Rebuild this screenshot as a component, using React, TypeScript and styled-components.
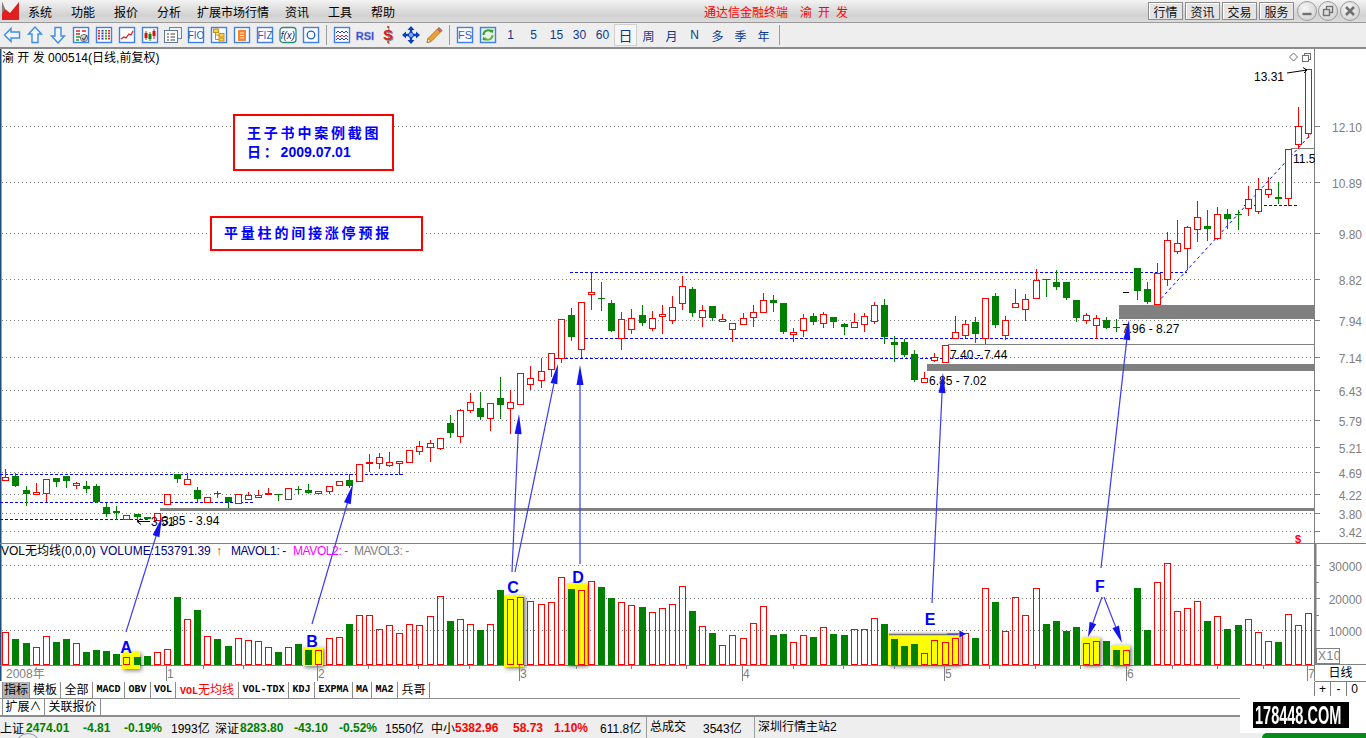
import React from 'react';
import styled, { createGlobalStyle } from 'styled-components';

const GlobalStyle = createGlobalStyle`
  html, body {
    margin: 0;
    padding: 0;
    background: #ffffff;
    overflow: hidden;
  }
  * {
    box-sizing: border-box;
  }
`;

const FONT = '"Liberation Sans", "Noto Sans CJK SC", sans-serif';
const MONO = '"Liberation Mono", "Noto Sans CJK SC", monospace';

// kind, body top, body bottom, wick top, wick bottom, volume top (all in page pixels)
type Bar = ['r' | 'g', number, number, number, number, number];

const BARS: Bar[] = [
  ['r', 477, 480, 469, 480, 632], ['g', 476, 486, 473, 486, 639], ['g', 490, 494, 486, 505, 643], ['r', 492, 494, 483, 494, 647],
  ['r', 479, 493, 479, 501, 636], ['g', 478, 482, 478, 486, 642], ['g', 476, 481, 476, 487, 639], ['r', 483, 485, 482, 488, 643],
  ['g', 486, 489, 481, 492, 652], ['g', 486, 502, 484, 502, 650], ['g', 507, 514, 503, 516, 651], ['g', 511, 513, 506, 519, 654],
  ['r', 515, 519, 515, 519, 657], ['g', 514, 517, 514, 520, 657], ['g', 517, 519, 517, 519, 656], ['r', 513, 520, 513, 520, 652],
  ['r', 494, 504, 494, 504, 649], ['g', 474, 479, 474, 482, 597], ['r', 479, 484, 473, 484, 619], ['g', 490, 499, 487, 501, 610],
  ['r', 497, 502, 497, 502, 636], ['g', 493, 494, 491, 497, 639], ['g', 497, 502, 497, 507, 646], ['r', 494, 503, 494, 503, 638],
  ['r', 495, 499, 492, 499, 640], ['r', 495, 497, 490, 497, 641], ['r', 493, 494, 488, 494, 647], ['g', 494, 495, 494, 500, 652],
  ['r', 488, 499, 488, 499, 647], ['g', 489, 490, 486, 493, 644], ['g', 490, 493, 484, 493, 650], ['r', 491, 493, 491, 493, 650],
  ['r', 486, 491, 486, 493, 638], ['r', 481, 485, 481, 485, 637], ['g', 480, 486, 474, 487, 624], ['r', 464, 481, 464, 481, 615],
  ['r', 462, 463, 454, 471, 615], ['r', 457, 463, 453, 468, 629], ['r', 462, 465, 452, 466, 625], ['r', 461, 463, 461, 474, 633],
  ['r', 450, 462, 450, 462, 624], ['r', 446, 451, 441, 454, 625], ['r', 443, 447, 440, 461, 616], ['r', 438, 448, 438, 449, 596],
  ['g', 423, 433, 415, 437, 621], ['r', 410, 436, 409, 442, 619], ['r', 402, 410, 393, 412, 624], ['g', 408, 417, 392, 419, 630],
  ['r', 403, 418, 403, 430, 624], ['g', 398, 405, 377, 418, 590], ['r', 402, 408, 390, 433, 599], ['r', 373, 404, 373, 404, 597],
  ['r', 378, 384, 366, 389, 601], ['r', 371, 380, 358, 387, 604], ['r', 353, 369, 353, 376, 602], ['r', 319, 358, 319, 362, 577],
  ['g', 315, 337, 308, 340, 589], ['r', 302, 349, 302, 357, 590], ['r', 292, 294, 273, 309, 581], ['g', 298, 299, 282, 310, 587],
  ['g', 303, 331, 300, 331, 598], ['r', 319, 338, 312, 349, 602], ['r', 318, 329, 309, 333, 605], ['g', 315, 323, 305, 325, 607],
  ['r', 318, 328, 311, 330, 612], ['r', 314, 316, 305, 333, 608], ['r', 307, 320, 296, 323, 604], ['r', 286, 303, 276, 309, 586],
  ['g', 289, 313, 287, 316, 611], ['r', 310, 317, 305, 326, 626], ['g', 306, 318, 306, 320, 633], ['r', 319, 321, 314, 321, 645],
  ['r', 323, 329, 323, 341, 635], ['r', 318, 324, 313, 324, 638], ['r', 312, 317, 305, 326, 623], ['r', 300, 312, 293, 312, 606],
  ['g', 300, 303, 295, 311, 635], ['g', 303, 332, 303, 333, 634], ['r', 332, 334, 328, 341, 642], ['r', 318, 330, 314, 336, 635],
  ['g', 316, 322, 313, 324, 637], ['r', 314, 323, 312, 327, 627], ['g', 317, 322, 317, 327, 634], ['g', 324, 327, 323, 334, 635],
  ['r', 322, 327, 313, 327, 629], ['r', 316, 324, 313, 331, 629], ['r', 305, 321, 302, 323, 618], ['g', 305, 337, 299, 343, 624],
  ['g', 342, 345, 336, 361, 639], ['g', 342, 355, 339, 356, 646], ['g', 354, 380, 350, 381, 644], ['r', 378, 382, 372, 382, 653],
  ['r', 357, 360, 353, 361, 640], ['r', 345, 362, 345, 362, 642], ['r', 332, 338, 316, 338, 638], ['r', 324, 335, 320, 337, 633],
  ['g', 322, 334, 317, 342, 638], ['r', 298, 338, 298, 343, 588], ['g', 296, 325, 293, 327, 602], ['r', 320, 335, 316, 339, 631],
  ['r', 303, 307, 289, 307, 597], ['r', 299, 309, 294, 320, 615], ['r', 280, 298, 269, 298, 588], ['g', 279, 280, 279, 296, 624],
  ['g', 282, 287, 270, 289, 621], ['g', 282, 298, 282, 299, 631], ['g', 300, 318, 300, 321, 627], ['r', 315, 320, 313, 323, 643],
  ['r', 318, 325, 315, 338, 641], ['g', 320, 328, 317, 328, 641], ['g', 327, 328, 319, 331, 650], ['r', 0, 0, 0, 0, 650],
  ['g', 268, 291, 268, 299, 588], ['g', 289, 302, 282, 303, 630], ['r', 273, 304, 263, 304, 582], ['r', 240, 279, 232, 285, 563],
  ['r', 243, 251, 220, 253, 611], ['r', 227, 248, 226, 269, 608], ['r', 217, 229, 201, 241, 601], ['g', 226, 229, 210, 240, 621],
  ['r', 214, 238, 207, 239, 616], ['g', 214, 219, 209, 228, 629], ['g', 214, 215, 210, 229, 625], ['r', 199, 208, 186, 215, 619],
  ['r', 189, 211, 178, 213, 632], ['r', 189, 194, 177, 197, 641], ['g', 197, 199, 182, 203, 642], ['r', 149, 198, 149, 205, 614],
  ['r', 126, 144, 107, 148, 625], ['r', 69, 133, 69, 137, 613],
];

const barX = (i: number) => Math.round(5.3 + 10.1 * i);

const GRID_Y = [126, 182, 233, 279, 320, 357, 390, 420, 447, 472, 494, 513, 531];
const PRICES = ['12.10', '10.89', '9.80', '8.82', '7.94', '7.14', '6.43', '5.79', '5.21', '4.69', '4.22', '3.80', '3.42'];
const VOL_GRID = [
  { y: 565, label: '30000' },
  { y: 598, label: '20000' },
  { y: 630, label: '10000' },
];
const MONTHS = [
  { x: 166, label: '1' },
  { x: 317, label: '2' },
  { x: 519, label: '3' },
  { x: 742, label: '4' },
  { x: 944, label: '5' },
  { x: 1126, label: '6' },
  { x: 1307, label: '7' },
];
const DATE_TICKS = [203, 243, 368, 418, 469, 576, 631, 686, 793, 843, 894, 989, 1035, 1080, 1172, 1217, 1263];

const DASHED = [
  [0, 474, 405],
  [0, 502, 253],
  [0, 519, 150],
  [570, 272, 1187],
  [580, 338, 1123],
  [555, 358, 985],
  [1244, 205, 1297],
];

const HIGHLIGHTS = [
  [122, 652, 18, 17],
  [303, 647, 20, 19],
  [504, 595, 20, 72],
  [567, 583, 20, 82],
  [888, 633, 72, 32],
  [1082, 637, 18, 28],
  [1111, 645, 19, 20],
];

const ARROWS = [
  [126, 632, 162, 517],
  [312, 624, 353, 484],
  [512, 572, 519, 414],
  [515, 572, 558, 364],
  [580, 564, 580, 365],
  [932, 603, 943, 373],
  [1101, 568, 1129, 320],
  [1102, 597, 1088, 637],
  [1104, 597, 1122, 643],
  [947, 634, 966, 634],
];

const LETTERS = [
  { x: 126, y: 653, t: 'A' },
  { x: 312, y: 647, t: 'B' },
  { x: 513, y: 593, t: 'C' },
  { x: 578, y: 583, t: 'D' },
  { x: 930, y: 625, t: 'E' },
  { x: 1100, y: 592, t: 'F' },
];

const CHART_LABELS = [
  { x: 162, y: 525, t: '3.85 - 3.94' },
  { x: 151, y: 526, t: '3.51' },
  { x: 1122, y: 333, t: '7.96 - 8.27' },
  { x: 950, y: 359, t: '7.40 - 7.44' },
  { x: 929, y: 385, t: '6.85 - 7.02' },
  { x: 1254, y: 81, t: '13.31' },
  { x: 1293, y: 163, t: '11.5' },
];

const BLUE = '#3f7fe8';

const Page = styled.div`
  width: 1366px;
  height: 738px;
  position: relative;
  overflow: hidden;
  font-family: ${FONT};
  font-size: 12px;
  color: #000000;
  background: #ffffff;
`;

const TitleBar = styled.div`
  height: 23px;
  display: flex;
  align-items: center;
  background: linear-gradient(#f4f4f4, #e6e6e6 25%, #d2d2d2 70%, #dcdcdc);
  border-bottom: 1px solid #9a9a9a;
`;

const Logo = styled.svg`
  width: 17px;
  height: 18px;
  margin-left: 2px;
  margin-right: 9px;
  flex: none;
`;

const Menu = styled.div`
  display: flex;
  width: 676px;
`;

const MenuItem = styled.span<{ $w: number }>`
  width: ${(p) => p.$w}px;
  flex: none;
`;

const AppTitle = styled.div`
  display: flex;
  color: #ff0000;
  width: 444px;
  flex: none;
`;

const AppName = styled.span`
  margin-right: 12px;
`;

const StockWide = styled.span`
  letter-spacing: 6px;
`;

const QuickButtons = styled.div`
  display: flex;
  gap: 2px;
  margin-right: 1px;
`;

const QuickButton = styled.button`
  width: 35px;
  height: 18px;
  padding: 0;
  font: 12px ${FONT};
  color: #111111;
  background: #e4e4e4;
  border: 1px solid #8c8c8c;
  box-shadow: inset 1px 1px 0 #ffffff;
`;

const WinButton = styled.div`
  width: 20px;
  height: 20px;
  margin-left: 1.5px;
  border-radius: 50%;
  border: 1px solid #9c9c9c;
  background: radial-gradient(circle at 40% 35%, #f6f6f6, #cacaca);
  display: flex;
  align-items: center;
  justify-content: center;
  flex: none;
`;

const Toolbar = styled.div`
  height: 26px;
  display: flex;
  align-items: center;
  background: #eeeeee;
  border-bottom: 2px solid #8c8c8c;
`;

const ToolButton = styled.div<{ $active?: boolean }>`
  width: 23px;
  height: 22px;
  flex: none;
  display: flex;
  align-items: center;
  justify-content: center;
  font-size: ${(p) => (p.$active ? 14 : 12)}px;
  color: #0a3a8c;
  background: ${(p) => (p.$active ? '#f6f6f6' : 'transparent')};
  border: ${(p) => (p.$active ? '1px solid #d0d0d0' : 'none')};
`;

const ToolSep = styled.div`
  width: 8px;
  height: 20px;
  flex: none;
  position: relative;
  &::after {
    content: '';
    position: absolute;
    left: 4px;
    top: 0;
    bottom: 0;
    width: 1px;
    background: #9c9c9c;
  }
`;

const ChartRow = styled.div`
  display: flex;
  height: 633px;
`;

const Plot = styled.div`
  width: 1315px;
  height: 633px;
  position: relative;
  flex: none;
  overflow: hidden;
`;

const ChartSvg = styled.svg`
  display: block;
  font-family: ${FONT};
`;

const AxisColumn = styled.div`
  width: 51px;
  display: flex;
  flex-direction: column;
`;

const DayLabel = styled.div`
  height: 17px;
  line-height: 16px;
  text-align: center;
  font-size: 12px;
  border-bottom: 1px solid #808080;
`;

const StockHeading = styled.div`
  position: absolute;
  left: 2px;
  top: 2px;
  font-size: 12px;
  line-height: 14px;
  white-space: pre;
`;

const VolLegend = styled.div`
  position: absolute;
  left: 1px;
  top: 495px;
  display: flex;
  line-height: 14px;
  white-space: nowrap;
`;

const LegendItem = styled.span<{ $color: string; $w: number; $tight?: boolean }>`
  color: ${(p) => p.$color};
  width: ${(p) => p.$w}px;
  flex: none;
  letter-spacing: ${(p) => (p.$tight ? -0.4 : 0)}px;
`;

const Note = styled.div<{ $x: number; $y: number; $w: number; $h: number }>`
  position: absolute;
  left: ${(p) => p.$x}px;
  top: ${(p) => p.$y - 49}px;
  width: ${(p) => p.$w}px;
  height: ${(p) => p.$h}px;
  border: 2px solid #ff0000;
  background: #ffffff;
  padding-left: 12px;
  display: flex;
  flex-direction: column;
  justify-content: center;
  color: #0000ff;
  font-size: 14px;
  font-weight: 700;
  line-height: 19px;
  letter-spacing: 2.8px;
`;

const NoteDigits = styled.span`
  letter-spacing: 0;
`;

const TabRow = styled.div`
  height: 17px;
  display: flex;
  border-bottom: 1px solid #8c8c8c;
  position: relative;
`;

const RowTwo = styled(TabRow)`
  height: 18px;
  border-bottom-width: 2px;
`;

const Tab = styled.div<{ $w: number; $active?: boolean; $mono?: boolean; $hot?: boolean }>`
  width: ${(p) => p.$w}px;
  flex: none;
  text-align: center;
  line-height: 16px;
  border-right: 1px solid #8c8c8c;
  background: ${(p) => (p.$active ? '#b4b4b4' : '#ffffff')};
  color: ${(p) => (p.$hot ? '#ff0000' : '#000000')};
  font-family: ${(p) => (p.$mono ? MONO : FONT)};
  font-size: ${(p) => (p.$mono ? 10 : 12)}px;
  font-weight: ${(p) => (p.$mono ? 700 : 400)};
  &:first-child {
    margin-left: 2px;
    border-left: 1px solid #8c8c8c;
  }
`;

const TabHan = styled.span`
  font-family: ${FONT};
  font-size: 12px;
  font-weight: 400;
`;

const ZoomCells = styled.div`
  position: absolute;
  left: 1314px;
  top: 0;
  display: flex;
`;

const ZoomCell = styled.div`
  width: 16px;
  height: 16px;
  text-align: center;
  line-height: 15px;
  border-left: 1px solid #808080;
`;

const StatusBar = styled.div`
  height: 21px;
  display: flex;
  align-items: center;
  background: #eeeeee;
  white-space: nowrap;
`;

const Quote = styled.span<{ $w: number; $tone?: 'up' | 'down' }>`
  width: ${(p) => p.$w}px;
  flex: none;
  font-weight: ${(p) => (p.$tone ? 700 : 400)};
  color: ${(p) => (p.$tone === 'up' ? '#ff0000' : p.$tone === 'down' ? '#008000' : '#000000')};
`;

const StatusCell = styled.span<{ $w: number }>`
  width: ${(p) => p.$w}px;
  height: 21px;
  line-height: 21px;
  flex: none;
  padding-left: 3px;
  border-left: 1px solid #9c9c9c;
`;

const LensArc = styled.div`
  position: absolute;
  left: 15px;
  top: 733px;
  width: 26px;
  height: 26px;
  border-radius: 50%;
  border: 1px solid #7f97b0;
`;

const Watermark = styled.div`
  position: absolute;
  left: 1240px;
  top: 696px;
  width: 126px;
  height: 37px;
  background: #ffffff;
  display: flex;
  align-items: center;
  padding-left: 13px;
`;

const WatermarkText = styled.div`
  width: 96px;
  height: 26px;
  background: #000000;
  overflow: hidden;
  color: #ffffff;
  font-size: 25px;
  font-weight: 700;
  line-height: 26px;
  white-space: nowrap;
  & > span {
    display: inline-block;
    transform: scaleX(0.58);
    transform-origin: left center;
    margin-left: 2px;
  }
`;

const GreenBlob = styled.div`
  position: absolute;
  left: 1262px;
  top: 733px;
  width: 104px;
  height: 5px;
  background: #0a8a1a;
  border-radius: 6px 0 0 0;
`;

const Frame = ({ children, color = BLUE }: { children?: React.ReactNode; color?: string }) => (
  <svg width="18" height="18" viewBox="0 0 18 18">
    <rect x="1.5" y="1.5" width="15" height="15" fill="#ffffff" stroke={color} strokeWidth="1.4" />
    {children}
  </svg>
);

const FrameText = ({ t, size = 10 }: { t: string; size?: number }) => (
  <text x="9" y="13" fontSize={size} fontFamily={FONT} fill="#1f5fc8" textAnchor="middle">
    {t}
  </text>
);

const OutlineArrow = ({ d }: { d: string }) => (
  <svg width="18" height="18" viewBox="0 0 18 18">
    <path d={d} fill="#f2f7ff" stroke="#3f8ce8" strokeWidth="1.4" strokeLinejoin="miter" />
  </svg>
);

const ICONS: React.ReactNode[] = [
  <OutlineArrow key="back" d="M1.5 9 L8 2.5 V6 H16.5 V12 H8 V15.5 Z" />,
  <OutlineArrow key="up" d="M9 1 L15.5 8 H12 V16.5 H6 V8 H2.5 Z" />,
  <OutlineArrow key="down" d="M9 17 L15.5 10 H12 V1.5 H6 V10 H2.5 Z" />,
  <Frame key="list">
    <path d="M4 5 H8 M10 5 H14 M4 8 H8" stroke="#e02020" strokeWidth="1.4" />
    <path d="M4 11 H8 M4 14 H7" stroke="#18a018" strokeWidth="1.4" />
    <circle cx="12" cy="12" r="3.6" fill="#d8d8d8" stroke="#707070" />
    <path d="M10 12 L12 14 L15 9" fill="none" stroke="#505050" strokeWidth="1.2" />
  </Frame>,
  <Frame key="table">
    <path d="M4 4 V14" stroke="#e02020" strokeWidth="2" strokeDasharray="1.6 1" />
    <path d="M7.5 4 V14" stroke="#2020e0" strokeWidth="2" strokeDasharray="1.6 1" />
    <path d="M11 4 V14" stroke="#18a018" strokeWidth="2" strokeDasharray="1.6 1" />
    <path d="M14 4 V14" stroke="#e02020" strokeWidth="2" strokeDasharray="1.6 1" />
  </Frame>,
  <Frame key="line">
    <path d="M3 13 L6 11 L8 12 L11 8 L13 9 L15 5" fill="none" stroke="#e01010" strokeWidth="1.2" />
  </Frame>,
  <Frame key="candle">
    <path d="M5 5 V14 M13 3 V13" stroke="#e01010" />
    <path d="M9 6 V15" stroke="#108010" />
    <rect x="3.5" y="7" width="3" height="5" fill="#e01010" />
    <rect x="7.5" y="8" width="3" height="5" fill="#108010" />
    <rect x="11.5" y="5" width="3" height="5" fill="#e01010" />
  </Frame>,
  <svg key="windows" width="18" height="18" viewBox="0 0 18 18">
    <rect x="5.5" y="1.5" width="12" height="11" fill="#eef3fb" stroke="#5d86c0" />
    <rect x="0.5" y="4.5" width="13" height="12" fill="#ffffff" stroke="#607898" />
    <path d="M3 8 H5 M6.5 8 H11 M3 11 H5 M6.5 11 H11 M3 14 H5 M6.5 14 H11" stroke="#404040" />
  </svg>,
  <Frame key="f10">
    <FrameText t="FIO" />
  </Frame>,
  <Frame key="tree">
    <rect x="3.5" y="3" width="5" height="3.5" fill="#f6d24a" stroke="#c89018" />
    <rect x="9" y="7.5" width="5" height="3.5" fill="#f6d24a" stroke="#c89018" />
    <rect x="9" y="12" width="5" height="3" fill="#f6d24a" stroke="#c89018" />
    <path d="M5.5 6.5 V13.5 H9 M5.5 9 H9" fill="none" stroke="#c89018" />
  </Frame>,
  <Frame key="clip">
    <rect x="5" y="4" width="8" height="11" fill="#f08838" />
    <path d="M7 3.5 H11 M7 7 H11 M7 9.5 H11 M7 12 H11" stroke="#ffe8d0" strokeWidth="1.1" />
  </Frame>,
  <Frame key="f12">
    <FrameText t="FIZ" />
  </Frame>,
  <svg key="fx" width="18" height="18" viewBox="0 0 18 18">
    <rect x="1" y="1.5" width="16" height="15" rx="3" fill="#ffffff" stroke="#2a8a80" strokeWidth="1.3" />
    <text x="9" y="13" fontSize="10" fontStyle="italic" fontFamily={FONT} fill="#10306a" textAnchor="middle">
      f(x)
    </text>
  </svg>,
  <Frame key="circle">
    <circle cx="9" cy="9" r="3.8" fill="none" stroke="#1f5fc8" strokeWidth="1.3" />
  </Frame>,
  <Frame key="wave">
    <path d="M3 7 L5 5 L7 7 L9 5 L11 7 L13 5 L15 7" fill="none" stroke="#2040d0" />
    <path d="M3 11 L5 9 L7 11 L9 9 L11 11 L13 9 L15 11" fill="none" stroke="#e02020" />
    <path d="M3 14 L5 12 L7 14 L9 12 L11 14 L13 12 L15 14" fill="none" stroke="#2040d0" />
  </Frame>,
  <svg key="rsi" width="22" height="18" viewBox="0 0 22 18">
    <text x="11" y="13.5" fontSize="11" fontWeight="700" fontFamily={FONT} fill="#3048c8" stroke="#8090e0" strokeWidth="0.3" textAnchor="middle">
      RSI
    </text>
  </svg>,
  <svg key="dollar" width="18" height="20" viewBox="0 0 18 20">
    <path d="M9.8 1 V19" stroke="#909090" strokeWidth="1.4" />
    <text x="10" y="16" fontSize="15" fontWeight="700" fontFamily={FONT} fill="#8c8c8c" textAnchor="middle">
      S
    </text>
    <text x="9" y="15" fontSize="15" fontWeight="700" fontFamily={FONT} fill="#d82020" textAnchor="middle">
      S
    </text>
    <path d="M9 1 V3 M9 16 V18" stroke="#d82020" strokeWidth="1.4" />
  </svg>,
  <svg key="move" width="20" height="20" viewBox="0 0 20 20">
    <path d="M10 1 L13.5 5 H6.5 Z M10 19 L13.5 15 H6.5 Z M1 10 L5 6.5 V13.5 Z M19 10 L15 6.5 V13.5 Z" fill="#0a3fc0" />
    <path d="M3 10 H17 M10 3 V17" stroke="#0a3fc0" strokeWidth="2.4" />
    <circle cx="10" cy="10" r="2.6" fill="#7fa8ee" stroke="#0a3fc0" />
  </svg>,
  <svg key="pencil" width="18" height="18" viewBox="0 0 18 18">
    <path d="M3 12.5 L12.5 3 L15.5 6 L6 15.5 L2 16.5 Z" fill="#f0a030" stroke="#b87820" />
    <path d="M12.5 3 L14 1.6 L17 4.5 L15.5 6 Z" fill="#e07070" stroke="#a05050" />
    <path d="M2 16.5 L3 12.5 L6 15.5 Z" fill="#f8e8c8" stroke="#806030" strokeWidth="0.6" />
  </svg>,
];

const FS_ICONS: React.ReactNode[] = [
  <Frame key="fs">
    <FrameText t="FS" size={11} />
  </Frame>,
  <svg key="refresh" width="18" height="18" viewBox="0 0 18 18">
    <rect x="1.5" y="1.5" width="15" height="15" fill="#e8f0e8" stroke={BLUE} strokeWidth="1.4" />
    <path d="M4.5 9 A4.5 4.5 0 0 1 12.5 6" fill="none" stroke="#30a030" strokeWidth="2" />
    <path d="M13.5 9 A4.5 4.5 0 0 1 5.5 12" fill="none" stroke="#60b840" strokeWidth="2" />
    <path d="M11 3.5 L14.5 4 L13.5 7.5 Z M7 14.5 L3.5 14 L4.5 10.5 Z" fill="#30a030" />
  </svg>,
];

const PERIODS = ['1', '5', '15', '30', '60', '日', '周', '月', 'N', '多', '季', '年'];

const TABS = [
  { t: '指标', w: 28, active: true },
  { t: '模板', w: 31 },
  { t: '全部', w: 32 },
  { t: 'MACD', w: 32, mono: true },
  { t: 'OBV', w: 26, mono: true },
  { t: 'VOL', w: 25, mono: true },
  { t: 'VOL无均线', w: 63, mono: true, hot: true },
  { t: 'VOL-TDX', w: 50, mono: true },
  { t: 'KDJ', w: 26, mono: true },
  { t: 'EXPMA', w: 38, mono: true },
  { t: 'MA', w: 19, mono: true },
  { t: 'MA2', w: 26, mono: true },
  { t: '兵哥', w: 32 },
];

type Tone = 'up' | 'down' | undefined;
const QUOTES: [string, number, Tone][] = [
  ['上证', 26, undefined], ['2474.01', 57, 'down'], ['-4.81', 41, 'down'], ['-0.19%', 47, 'down'], ['1993亿', 44, undefined],
  ['深证', 25, undefined], ['8283.80', 54, 'down'], ['-43.10', 45, 'down'], ['-0.52%', 46, 'down'], ['1550亿', 46, undefined],
  ['中小', 24, undefined], ['5382.96', 58, 'up'], ['58.73', 41, 'up'], ['1.10%', 46, 'up'], ['611.8亿', 46, undefined],
];

const Arrow = ({ a }: { a: number[] }) => {
  const [x1, y1, x2, y2] = a;
  const len = Math.hypot(x2 - x1, y2 - y1);
  const ux = (x2 - x1) / len;
  const uy = (y2 - y1) / len;
  const head = Math.min(20, len * 0.35);
  const bx = x2 - ux * head;
  const by = y2 - uy * head;
  const pts = `${x2},${y2} ${bx - uy * 3.5},${by + ux * 3.5} ${bx + uy * 3.5},${by - ux * 3.5}`;
  return (
    <g>
      <line x1={x1} y1={y1} x2={bx} y2={by} stroke="#3a3af4" strokeWidth="1.2" />
      <polygon points={pts} fill="#1414f0" />
    </g>
  );
};

const PlotDrawing = () => (
  <ChartSvg width="1315" height="633" viewBox="0 49 1315 633">
    <defs>
      <filter id="hl" x="-30%" y="-30%" width="170%" height="170%">
        <feDropShadow dx="1.5" dy="1.5" stdDeviation="2" floodColor="#444444" floodOpacity="0.75" />
      </filter>
    </defs>
    <rect x="0" y="49" width="1.5" height="632" fill="#1b4f7f" />

    {[...GRID_Y, ...VOL_GRID.map((v) => v.y)].map((y) => (
      <line key={y} x1="2" x2="1314" y1={y + 0.5} y2={y + 0.5} stroke="#808080" strokeDasharray="1 3" />
    ))}

    <line x1="0" x2="1315" y1="543.5" y2="543.5" stroke="#808080" />
    <line x1="0" x2="1315" y1="665.5" y2="665.5" stroke="#808080" />
    <line x1="1314.5" x2="1314.5" y1="49" y2="681" stroke="#808080" />

    <rect x="160" y="508" width="1155" height="3" fill="#808080" />
    <rect x="927" y="364" width="388" height="7" fill="#808080" />
    <rect x="1119" y="305" width="196" height="14" fill="#808080" />
    <line x1="948" x2="1315" y1="344.5" y2="344.5" stroke="#808080" />
    <line x1="1291" x2="1315" y1="148.5" y2="148.5" stroke="#808080" />

    {DASHED.map(([x1, y, x2]) => (
      <line key={`${x1}-${y}`} x1={x1} x2={x2} y1={y + 0.5} y2={y + 0.5} stroke="#0000ff" strokeDasharray="3 2" />
    ))}
    <line x1="1157" y1="303" x2="1312" y2="133" stroke="#0000ff" strokeDasharray="3 3" />

    {HIGHLIGHTS.map(([x, y, w, h]) => (
      <rect key={x} x={x} y={y} width={w} height={h} fill="#ffff00" filter="url(#hl)" />
    ))}
    <line x1="889" x2="958" y1="634.5" y2="634.5" stroke="#707070" strokeWidth="1.5" />

    {BARS.map((b, i) => {
      const cx = barX(i);
      return b[0] === 'r' ? (
        <rect key={i} x={cx - 2.5} y={b[5] + 0.5} width="6" height={664 - b[5]} fill="none" stroke="#ff0000" />
      ) : (
        <rect key={i} x={cx - 3} y={b[5]} width="7" height={665 - b[5]} fill="#008000" />
      );
    })}

    {BARS.map((b, i) => {
      const cx = barX(i);
      const [kind, top, bottom, wickTop, wickBottom] = b;
      if (top === 0) return null;
      const color = kind === 'r' ? '#ff0000' : '#008000';
      return (
        <g key={i}>
          <line x1={cx + 0.5} x2={cx + 0.5} y1={wickTop} y2={wickBottom + 1} stroke={color} />
          {kind === 'r' ? (
            <rect x={cx - 2.5} y={top + 0.5} width="6" height={Math.max(bottom - top, 1)} fill="#ffffff" stroke={color} />
          ) : (
            <rect x={cx - 3} y={top} width="7" height={Math.max(bottom - top, 1)} fill={color} />
          )}
        </g>
      );
    })}

    <line x1="1123" x2="1129" y1="292.5" y2="292.5" stroke="#000000" />
    <line x1="137" x2="150" y1="521.5" y2="521.5" stroke="#000000" />
    <path d="M141 518.5 L137 521.5 L141 524.5" fill="none" stroke="#000000" />
    <path d="M1287 73 L1307 70 M1303 67.5 L1307 70 L1304 73" fill="none" stroke="#000000" />

    {CHART_LABELS.map((l) => (
      <text key={l.t} x={l.x} y={l.y} fontSize="12" fill="#000000">
        {l.t}
      </text>
    ))}

    <text x="1295" y="543" fontSize="11" fontWeight="700" fill="#ff0000">
      $
    </text>

    <path d="M1293.5 53 L1297.5 57 L1293.5 61 L1289.5 57 Z" fill="#ffffff" stroke="#707070" />
    <rect x="1304.5" y="53.5" width="6" height="6" fill="#ffffff" stroke="#707070" />
    <rect x="1302.5" y="55.5" width="6" height="6" fill="#ffffff" stroke="#707070" />

    {ARROWS.map((a) => (
      <Arrow key={a.join('-')} a={a} />
    ))}

    {LETTERS.map((l) => (
      <text key={l.t} x={l.x} y={l.y} fontSize="16" fontWeight="700" fill="#0000ff" textAnchor="middle">
        {l.t}
      </text>
    ))}

    {DATE_TICKS.map((x) => (
      <line key={x} x1={x + 0.5} x2={x + 0.5} y1="665" y2="669" stroke="#808080" />
    ))}
    {MONTHS.map((m) => (
      <g key={m.label}>
        <line x1={m.x + 0.5} x2={m.x + 0.5} y1="665" y2="681" stroke="#808080" />
        <text x={m.x + 1} y="678" fontSize="12" fill="#808080">
          {m.label}
        </text>
      </g>
    ))}
    <text x="6" y="678" fontSize="12" fill="#808080" fontFamily={FONT}>
      2008年
    </text>
  </ChartSvg>
);

const AxisDrawing = () => (
  <ChartSvg width="51" height="616" viewBox="1315 49 51 616">
    <line x1="1315" x2="1366" y1="543.5" y2="543.5" stroke="#808080" />
    <line x1="1315" x2="1366" y1="664.5" y2="664.5" stroke="#808080" />
    <rect x="1315" y="544" width="1.5" height="121" fill="#808080" />
    {GRID_Y.map((y, i) => (
      <g key={y}>
        <line x1="1315" x2="1320" y1={y + 0.5} y2={y + 0.5} stroke="#808080" />
        <text x="1362" y={y + 5.5} fontSize="12" fill="#808080" textAnchor="end">
          {PRICES[i]}
        </text>
      </g>
    ))}
    {VOL_GRID.map((v) => (
      <g key={v.y}>
        <line x1="1315" x2="1320" y1={v.y + 0.5} y2={v.y + 0.5} stroke="#808080" />
        <text x="1362" y={v.y + 5.5} fontSize="12" fill="#808080" textAnchor="end">
          {v.label}
        </text>
      </g>
    ))}
    <line x1="1315" x2="1319" y1="582.5" y2="582.5" stroke="#808080" />
    <line x1="1315" x2="1319" y1="615.5" y2="615.5" stroke="#808080" />
    <rect x="1316.5" y="648.5" width="23" height="15" fill="#ffffff" stroke="#808080" />
    <text x="1318" y="660" fontSize="12" fill="#808080" letterSpacing="0.5">
      X10
    </text>
  </ChartSvg>
);

const App = () => {
  const menus: [string, number][] = [
    ['系统', 43],
    ['功能', 43],
    ['报价', 43],
    ['分析', 40],
    ['扩展市场行情', 88],
    ['资讯', 43],
    ['工具', 43],
    ['帮助', 43],
  ];

  return (
    <Page>
      <GlobalStyle />
      <TitleBar>
        <Logo viewBox="0 0 17 18">
          <rect width="17" height="18" fill="#e02020" />
          <path d="M0 0 H17 L8 11 L3 7 Z" fill="#f0f0f0" />
          <path d="M0 0 L3 7 L0 12 Z" fill="#808080" />
        </Logo>
        <Menu>
          {menus.map(([t, w]) => (
            <MenuItem key={t} $w={w}>
              {t}
            </MenuItem>
          ))}
        </Menu>
        <AppTitle>
          <AppName>通达信金融终端</AppName>
          <StockWide>渝开发</StockWide>
        </AppTitle>
        <QuickButtons>
          {['行情', '资讯', '交易', '服务'].map((t) => (
            <QuickButton key={t}>{t}</QuickButton>
          ))}
        </QuickButtons>
        <WinButton>
          <svg width="12" height="12" viewBox="0 0 12 12">
            <path d="M1.5 9 H10.5" stroke="#707070" strokeWidth="2.4" />
          </svg>
        </WinButton>
        <WinButton>
          <svg width="12" height="12" viewBox="0 0 12 12">
            <rect x="4.5" y="1.5" width="6" height="6" fill="none" stroke="#707070" strokeWidth="1.4" />
            <rect x="1.5" y="4.5" width="6" height="6" fill="#dcdcdc" stroke="#707070" strokeWidth="1.4" />
          </svg>
        </WinButton>
        <WinButton>
          <svg width="12" height="12" viewBox="0 0 12 12">
            <path d="M2 2 L10 10 M10 2 L2 10" stroke="#707070" strokeWidth="2.6" />
          </svg>
        </WinButton>
      </TitleBar>

      <Toolbar>
        {ICONS.slice(0, 14).map((icon, i) => (
          <ToolButton key={i}>{icon}</ToolButton>
        ))}
        <ToolSep />
        {ICONS.slice(14).map((icon, i) => (
          <ToolButton key={i}>{icon}</ToolButton>
        ))}
        <ToolSep />
        {FS_ICONS.map((icon, i) => (
          <ToolButton key={i}>{icon}</ToolButton>
        ))}
        {PERIODS.map((p) => (
          <ToolButton key={p} $active={p === '日'}>
            {p}
          </ToolButton>
        ))}
        <ToolSep />
      </Toolbar>

      <ChartRow>
        <Plot>
          <PlotDrawing />
          <StockHeading>渝 开 发 000514(日线,前复权)</StockHeading>
          <VolLegend>
            <LegendItem $color="#000000" $w={99}>
              VOL无均线(0,0,0)
            </LegendItem>
            <LegendItem $color="#000080" $w={116}>
              VOLUME:153791.39
            </LegendItem>
            <LegendItem $color="#ff0000" $w={15}>
              ↑
            </LegendItem>
            <LegendItem $color="#000080" $w={62} $tight>
              MAVOL1: -
            </LegendItem>
            <LegendItem $color="#ff00ff" $w={61} $tight>
              MAVOL2: -
            </LegendItem>
            <LegendItem $color="#808080" $w={60} $tight>
              MAVOL3: -
            </LegendItem>
          </VolLegend>
          <Note $x={233} $y={114} $w={161} $h={57}>
            <span>王子书中案例截图</span>
            <span>
              日：<NoteDigits>2009.07.01</NoteDigits>
            </span>
          </Note>
          <Note $x={210} $y={216} $w={213} $h={35}>
            <span>平量柱的间接涨停预报</span>
          </Note>
        </Plot>
        <AxisColumn>
          <AxisDrawing />
          <DayLabel>日线</DayLabel>
        </AxisColumn>
      </ChartRow>

      <TabRow>
        {TABS.map((t) => (
          <Tab key={t.t} $w={t.w} $active={t.active} $mono={t.mono} $hot={t.hot}>
            {t.hot ? (
              <>
                VOL<TabHan>无均线</TabHan>
              </>
            ) : (
              t.t
            )}
          </Tab>
        ))}
        <ZoomCells>
          <ZoomCell>+</ZoomCell>
          <ZoomCell>-</ZoomCell>
          <ZoomCell>0</ZoomCell>
        </ZoomCells>
      </TabRow>

      <RowTwo>
        <Tab $w={43}>扩展∧</Tab>
        <Tab $w={56}>关联报价</Tab>
      </RowTwo>

      <StatusBar>
        {QUOTES.map(([t, w, tone]) => (
          <Quote key={t} $w={w} $tone={tone}>
            {t}
          </Quote>
        ))}
        <StatusCell $w={57}>总成交</StatusCell>
        <Quote $w={51}>3543亿</Quote>
        <StatusCell $w={120}>深圳行情主站2</StatusCell>
      </StatusBar>

      <LensArc />
      <GreenBlob />
      <Watermark>
        <WatermarkText>
          <span>178448.COM</span>
        </WatermarkText>
      </Watermark>
    </Page>
  );
};

export default App;
